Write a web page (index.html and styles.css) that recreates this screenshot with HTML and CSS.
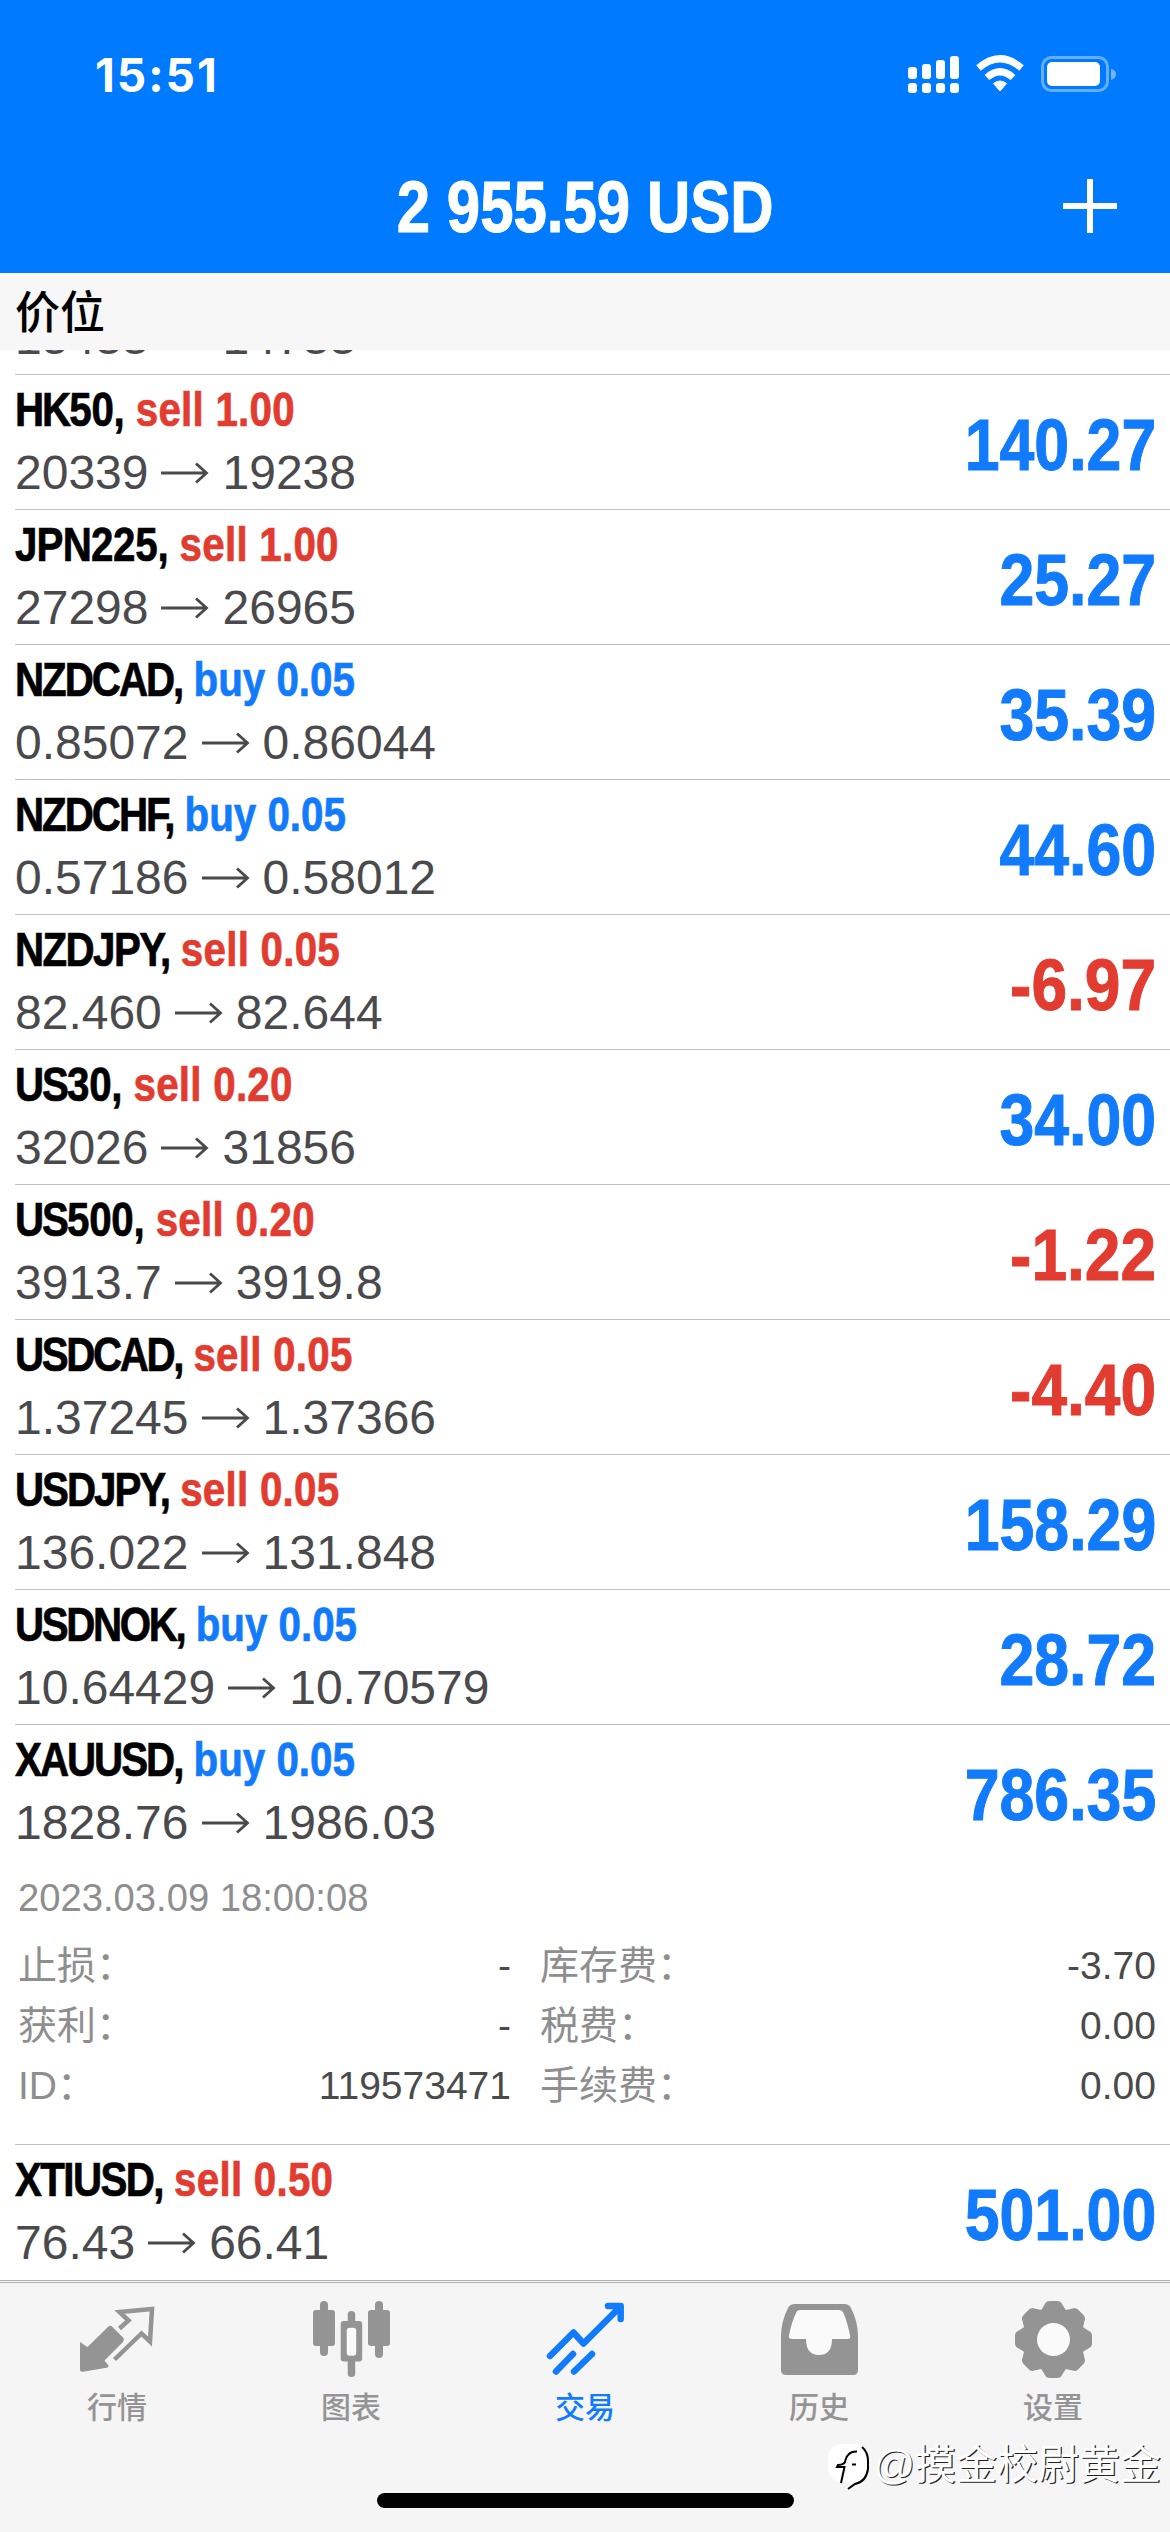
FILE: index.html
```html
<!DOCTYPE html>
<html lang="zh-CN">
<head>
<meta charset="utf-8">
<title>交易</title>
<link rel="stylesheet" href="styles.css">
</head>
<body>
<svg class="defs" width="0" height="0">
  <symbol id="arrow" viewBox="0 0 48 22"><path d="M0 11H45.5M35 1.500L45.5 11L35 20.500" fill="none" stroke="currentColor" stroke-width="2.8"/></symbol>
</svg>
<header class="top">
  <div class="status">
    <span class="time">15:51</span>
    <svg class="status-icons" width="210" height="40" viewBox="0 0 210 40">
      <g fill="#fff">
        <rect x="1" y="13" width="9" height="12" rx="3"/><rect x="15" y="10" width="9" height="15" rx="3"/><rect x="29" y="6" width="9" height="19" rx="3"/><rect x="43" y="2" width="9" height="23" rx="3"/>
        <rect x="1" y="29" width="9" height="10" rx="3"/><rect x="15" y="29" width="9" height="10" rx="3"/><rect x="29" y="29" width="9" height="10" rx="3"/><rect x="43" y="29" width="9" height="10" rx="3"/>
        <path d="M93 37L86.500 29.500Q93 24.500 99.500 29.500Z" stroke="#fff" stroke-width="1"/>
        <rect x="140" y="8" width="53" height="24" rx="5"/>
      </g>
      <g fill="none" stroke="#fff" stroke-width="7">
        <path d="M71.500 14Q93 -4.500 114.500 14"/><path d="M80 23.500Q93 12 106 23.500"/>
      </g>
      <rect x="135.500" y="3.500" width="65" height="33" rx="9" fill="none" stroke="#fff" stroke-opacity=".4" stroke-width="3"/>
      <path d="M204 15Q209 16 209 20T204 26Z" fill="#fff" fill-opacity=".45"/>
    </svg>
  </div>
  <div class="nav">
    <h1 class="balance">2 955.59 USD</h1>
    <svg class="plus" width="54" height="54" viewBox="0 0 54 54"><path d="M27 0V54M0 27H54" stroke="#fff" stroke-width="6"/></svg>
  </div>
</header>
<h2 class="section">价位</h2>
<main class="list">
  <div class="row cut"><div class="price">15433<svg><use href="#arrow"/></svg>14733</div></div>
  <div class="row"><div><div class="deal"><b>HK<span>50,</span></b> <i class="sell">sell 1.00</i></div><div class="price">20339<svg><use href="#arrow"/></svg>19238</div></div><div class="profit">140.27</div></div>
  <div class="row"><div><div class="deal"><b class="loose">JPN<span>225,</span></b> <i class="sell">sell 1.00</i></div><div class="price">27298<svg><use href="#arrow"/></svg>26965</div></div><div class="profit">25.27</div></div>
  <div class="row"><div><div class="deal"><b>NZDCAD,</b> <i class="buy">buy 0.05</i></div><div class="price">0.85072<svg><use href="#arrow"/></svg>0.86044</div></div><div class="profit">35.39</div></div>
  <div class="row"><div><div class="deal"><b>NZDCHF,</b> <i class="buy">buy 0.05</i></div><div class="price">0.57186<svg><use href="#arrow"/></svg>0.58012</div></div><div class="profit">44.60</div></div>
  <div class="row"><div><div class="deal"><b class="wide">NZDJPY,</b> <i class="sell">sell 0.05</i></div><div class="price">82.460<svg><use href="#arrow"/></svg>82.644</div></div><div class="profit loss">-6.97</div></div>
  <div class="row"><div><div class="deal"><b>US<span>30,</span></b> <i class="sell">sell 0.20</i></div><div class="price">32026<svg><use href="#arrow"/></svg>31856</div></div><div class="profit">34.00</div></div>
  <div class="row"><div><div class="deal"><b>US<span>500,</span></b> <i class="sell">sell 0.20</i></div><div class="price">3913.7<svg><use href="#arrow"/></svg>3919.8</div></div><div class="profit loss">-1.22</div></div>
  <div class="row"><div><div class="deal"><b class="tight">USDCAD,</b> <i class="sell">sell 0.05</i></div><div class="price">1.37245<svg><use href="#arrow"/></svg>1.37366</div></div><div class="profit loss">-4.40</div></div>
  <div class="row"><div><div class="deal"><b>USDJPY,</b> <i class="sell">sell 0.05</i></div><div class="price">136.022<svg><use href="#arrow"/></svg>131.848</div></div><div class="profit">158.29</div></div>
  <div class="row"><div><div class="deal"><b class="tight">USDNOK,</b> <i class="buy">buy 0.05</i></div><div class="price">10.64429<svg><use href="#arrow"/></svg>10.70579</div></div><div class="profit">28.72</div></div>
  <div class="row"><div><div class="deal"><b>XAUUSD,</b> <i class="buy">buy 0.05</i></div><div class="price">1828.76<svg><use href="#arrow"/></svg>1986.03</div></div><div class="profit">786.35</div></div>
  <div class="details">
    <div class="date">2023.03.09 18:00:08</div>
    <dl><dt>止损：</dt><dd>-</dd><dt>库存费：</dt><dd>-3.70</dd><dt>获利：</dt><dd>-</dd><dt>税费：</dt><dd>0.00</dd><dt>ID：</dt><dd>119573471</dd><dt>手续费：</dt><dd>0.00</dd></dl>
  </div>
  <div class="row"><div><div class="deal"><b class="wide">XTIUSD,</b> <i class="sell">sell 0.50</i></div><div class="price">76.43<svg><use href="#arrow"/></svg>66.41</div></div><div class="profit">501.00</div></div>
</main>
<footer class="bottom">
  <nav class="tabs">
    <a class="tab"><svg width="78" height="78" viewBox="0 0 78 78"><path d="M30.500 26.500Q32 25 34 26.500L45.500 38Q46.500 40 45 42L26.500 60.500L30.500 65.500L30 67.500L5 71.700Q2 72 2 70V42L9.500 47Z" fill="currentColor"/><path d="M41.500 28.500L50.500 20.500L41.500 12L74 9L72 41.500L63.500 33.500L36.500 59.500" fill="none" stroke="currentColor" stroke-width="4.500"/></svg>行情</a>
    <a class="tab"><svg width="78" height="78" viewBox="0 0 78 78"><g fill="currentColor"><rect x="1" y="10" width="22" height="36" rx="3"/><rect x="8" y="1" width="8" height="55" rx="4"/><rect x="56" y="10" width="22" height="36" rx="3"/><rect x="63" y="1" width="8" height="57" rx="4"/><rect x="35.700" y="11" width="7.500" height="14" rx="3.500"/><rect x="35.700" y="58" width="7.500" height="19" rx="3.500"/><rect x="28.700" y="21" width="21.500" height="40.500" rx="3"/></g><rect x="34.700" y="27.700" width="9.500" height="28" rx="3" fill="#fafafa"/></svg>图表</a>
    <a class="tab active"><svg width="78" height="78" viewBox="0 0 78 78"><path d="M4 56L27.500 32.500L37.500 43.500L73.500 7.500M62 6H74.700V19M10 71.500L27 54M28 71.500L46 54" fill="none" stroke="currentColor" stroke-width="6.500" stroke-linecap="round" stroke-linejoin="round"/></svg>交易</a>
    <a class="tab"><svg width="78" height="78" viewBox="0 0 78 78"><path d="M15 4H64Q69 4 71 8Q78 22 78 36V70Q78 75 73 75H6Q1 75 1 70V36Q1 22 8 8Q10 4 15 4Z" fill="currentColor"/><path d="M20 10H59Q62 10 63.500 13Q67 21 70 35Q71 39 68 39H52Q52 55 39 55T26 39H12Q8 39 9 35Q12 21 16 13Q17 10 20 10Z" fill="#fafafa"/></svg>历史</a>
    <a class="tab"><svg width="78" height="78" viewBox="0 0 78 78"><g fill="currentColor"><circle cx="39.500" cy="39.500" r="32"/><path id="tooth" d="M26 12L31 4Q32 1 36 1H43Q47 1 48 4L53 12V67L48 75Q47 78 43 78H36Q32 78 31 75L26 67Z"/><use href="#tooth" transform="rotate(45 39.500 39.500)"/><use href="#tooth" transform="rotate(90 39.500 39.500)"/><use href="#tooth" transform="rotate(135 39.500 39.500)"/></g><circle cx="39.500" cy="39.500" r="16.500" fill="#fafafa"/></svg>设置</a>
  </nav>
  <div class="home"></div>
  <div class="mark"><svg width="46" height="48" viewBox="0 0 46 48"><rect x="1" y="1" width="40" height="38" rx="14" fill="#fff"/><path d="M35 4Q41 9 41 18V26Q39 39 28 41L21 46" fill="none" stroke="#000" stroke-width="2"/><path d="M14 40L17.500 24H10L11 22Q18 22 18.500 17Q21 8 30 8.500M25 21.500H29" fill="none" stroke="#000" stroke-width="2"/></svg><span>@摸金校尉黄金</span></div>
</footer>
</body>
</html>
```
FILE: styles.css
```css
* { box-sizing: border-box; margin: 0; padding: 0; }
body {
  width: 1170px; height: 2532px; overflow: hidden; background: #fff;
  display: flex; flex-direction: column;
  font-family: "Liberation Sans", "Noto Sans CJK SC", sans-serif;
}
.defs { position: absolute; }
.top { flex: none; height: 273px; background: #007aff; color: #fff; }
.status { height: 150px; padding: 54px 54px 0 95px; display: flex; justify-content: space-between; align-items: flex-start; }
.status-icons { margin-right: -1px; }
.time { font: 700 46px/42px Inter, sans-serif; letter-spacing: 2px; }
.nav { height: 112px; display: grid; grid-template-columns: 1fr auto 1fr; align-items: center; }
.balance { grid-column: 2; padding-top: 3px; font-size: 72px; line-height: 109px; white-space: nowrap; transform: scaleX(.833); -webkit-text-stroke: 1px currentColor; }
.plus { justify-self: end; margin-right: 53px; }
.section {
  flex: none; height: 77px; padding-left: 15px; background: #f7f7f7; border-top: 3px solid #fdfdfd;
  font: 500 45px/68px "Noto Sans CJK SC", sans-serif;
}
.list { flex: 1; min-height: 0; overflow: hidden; padding-left: 15px; }
.row {
  height: 135px; padding: 5px 14px 0 0; border-top: 1px solid #c0c0c2;
  display: flex; justify-content: space-between;
}
.cut { height: 24px; border: 0; padding: 0; overflow: hidden; align-items: flex-end; }
.cut .price { margin-bottom: 3px; }
.deal { font-size: 48px; line-height: 60px; font-weight: 700; white-space: nowrap; transform: scaleX(.84); transform-origin: left; -webkit-text-stroke: .7px currentColor; }
.deal b { letter-spacing: -2.4px; }
.deal b span { letter-spacing: -.3px; }
.deal .tight { letter-spacing: -2.8px; }
.deal .wide { letter-spacing: -1.9px; }
.deal .loose { letter-spacing: -1px; }
.deal i { font-style: normal; }
.sell { color: #e23b30; }
.deal .sell { letter-spacing: .3px; }
.buy { color: #117bfb; }
.price { display: flex; align-items: center; gap: 13px; font-size: 48px; line-height: 66px; color: #4a4a4d; }
.price svg { width: 48px; height: 22px; margin-top: -1px; }
.profit { font-size: 72px; line-height: 130px; font-weight: 700; color: #117bfb; transform: scaleX(.87); transform-origin: right; -webkit-text-stroke: 1px currentColor; }
.profit.loss { color: #e23b30; transform: scaleX(.89); }
.details { height: 285px; padding: 9px 14px 0 3px; font-size: 39px; color: #8e8e8e; }
.date { font-size: 38.200px; line-height: 60px; }
dl { display: grid; grid-template-columns: 200px 293px 226px 1fr; grid-auto-rows: 60px; line-height: 60px; padding-top: 8px; }
dt:nth-of-type(even) { padding-left: 29px; }
dd { color: #4a4a4a; text-align: right; }
.bottom {
  position: relative; flex: none; height: 252px; background: #f5f5f5;
  border-top: 3px double #b2b2b2; display: flex; flex-direction: column; align-items: center;
}
.tabs { display: grid; grid-template-columns: repeat(5, 1fr); width: 100%; height: 210px; padding-top: 17px; }
.tab { display: flex; flex-direction: column; align-items: center; color: #949494; font: 500 30px/44px "Noto Sans CJK SC", sans-serif; gap: 5px; }
.active { color: #117bfb; }
.home { width: 417px; height: 15px; border-radius: 8px; background: #000; }
.mark { position: absolute; right: 9px; top: 160px; display: flex; color: #fff; font: 400 41px/44px "Liberation Sans", "Noto Sans CJK SC", sans-serif; text-shadow: 1.200px 1.200px 0 #222; }
```
